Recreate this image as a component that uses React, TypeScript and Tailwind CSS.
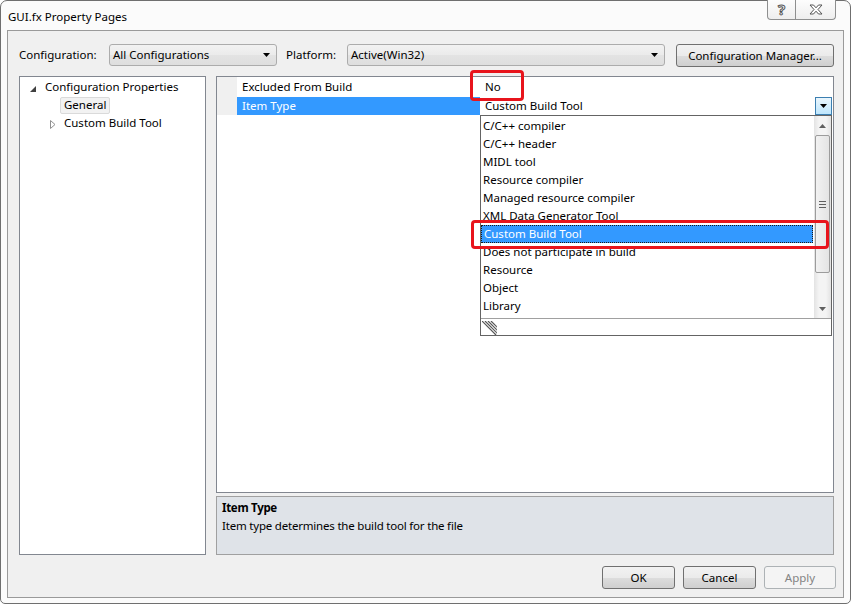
import clsx from 'clsx';

const ITEM_TYPES = [
  'C/C++ compiler',
  'C/C++ header',
  'MIDL tool',
  'Resource compiler',
  'Managed resource compiler',
  'XML Data Generator Tool',
  'Custom Build Tool',
  'Does not participate in build',
  'Resource',
  'Object',
  'Library',
];

function Caret({ className }: { className?: string }) {
  return (
    <svg width="7" height="4" viewBox="0 0 7 4" className={className}>
      <path d="M0 0h7L3.5 4z" fill="currentColor" />
    </svg>
  );
}

function Combo({ value, className }: { value: string; className?: string }) {
  return (
    <div
      className={clsx(
        'h-[22px] flex items-center justify-between pl-[3px] pr-[6px] rounded-[3px] border border-[#acacac] bg-[linear-gradient(#f2f2f2,#ebebeb_50%,#e3e3e3_51%,#dedede)]',
        className,
      )}
    >
      <span>{value}</span>
      <Caret className="text-black" />
    </div>
  );
}

function Btn({
  label,
  disabled,
  className,
}: {
  label: string;
  disabled?: boolean;
  className?: string;
}) {
  return (
    <div
      className={clsx(
        'h-[23px] flex items-center justify-center rounded-[3px] border',
        disabled
          ? 'border-[#adb2b5] bg-[#f4f4f4] text-[#838383]'
          : 'border-[#707070] bg-[linear-gradient(#f2f2f2,#ebebeb_50%,#dddddd_51%,#cfcfcf)] text-black',
        className,
      )}
    >
      {label}
    </div>
  );
}

function SizeGrip() {
  return (
    <svg width="15" height="14" viewBox="0 0 15 14">
      {[0, 3, 6, 9].map((o) => (
        <path key={o} d={`M${o} 0L${o + 14} 14`} stroke="#555" strokeWidth="1.2" />
      ))}
    </svg>
  );
}

function ItemTypeList() {
  return (
    <div className="absolute left-[263px] top-[38px] w-[352px] h-[221px] border border-[#646464] bg-white flex flex-col">
      <div className="flex flex-1">
        <div className="flex-1 flex flex-col pt-px">
          {ITEM_TYPES.map((t) => (
            <div
              key={t}
              className={clsx(
                'h-[18px] flex items-center pl-[2px]',
                t === 'Custom Build Tool' &&
                  'bg-[#3399ff] text-white border border-dotted border-[#1a1a1a] pl-[1px] mr-[1px]',
              )}
            >
              {t}
            </div>
          ))}
        </div>
        {/* vertical scrollbar */}
        <div className="w-[17px] bg-[linear-gradient(90deg,#e3e3e3,#f4f4f4_30%,#f4f4f4_70%,#e3e3e3)] flex flex-col items-center">
          <div className="h-[19px] flex items-center justify-center text-[#606060]">
            <Caret className="rotate-180" />
          </div>
          <div className="w-[15px] h-[138px] rounded-[2px] border border-[#9c9c9c] bg-[linear-gradient(90deg,#f2f2f2,#e4e4e4)] flex flex-col items-center justify-center gap-[2px]">
            <div className="w-[7px] h-px bg-[#606060]" />
            <div className="w-[7px] h-px bg-[#606060]" />
            <div className="w-[7px] h-px bg-[#606060]" />
          </div>
          <div className="flex-1" />
          <div className="h-[18px] flex items-center justify-center text-[#606060]">
            <Caret />
          </div>
        </div>
      </div>
      <div className="h-[17px] border-t border-[#a0a0a0] pl-[1px] flex items-end">
        <SizeGrip />
      </div>
    </div>
  );
}

export default function App() {
  return (
    <div className="relative w-[851px] h-[604px] bg-white font-['Noto_Sans','Open_Sans',sans-serif] text-[11.5px] text-black leading-none">
      <div className="w-full h-full flex flex-col border border-[#6f6f6f] rounded-t-[7px] rounded-b-[5px] bg-[#fbfbfb]">
        {/* title bar */}
        <div className="h-[29px] flex items-start">
          <span className="pl-[7px] pt-[10px]">GUI.fx Property Pages</span>
          <div className="ml-auto mr-[14px] flex h-[20px] -mt-px">
            <div className="w-[29px] border border-[#8e8f8f] border-t-0 rounded-bl-[4px] bg-[linear-gradient(#fdfdfd,#eeeeee)] flex items-center justify-center">
              <span className="text-[15px] font-bold text-white [-webkit-text-stroke:1px_#555]">?</span>
            </div>
            <div className="w-[40px] border border-[#8e8f8f] border-t-0 border-l-0 rounded-br-[4px] bg-[linear-gradient(#fdfdfd,#eeeeee)] flex items-center justify-center">
              <svg width="14" height="11" viewBox="0 0 14 11">
                <path
                  d="M1 1h3.5L7 3.8 9.5 1H13L9 5.5 13 10H9.5L7 7.2 4.5 10H1L5 5.5z"
                  fill="#fff"
                  stroke="#555"
                  strokeWidth="1"
                  strokeLinejoin="round"
                />
              </svg>
            </div>
          </div>
        </div>

        {/* client area */}
        <div className="flex-1 mx-[6px] mb-[5px] border border-[#9a9a9a] bg-[#f0f0f0] flex flex-col pt-[13px] pl-[11px] pr-[9px]">
          <div className="flex items-start">
            <span className="w-[90px] h-[22px] flex items-center">Configuration:</span>
            <Combo value="All Configurations" className="w-[168px]" />
            <span className="ml-[9px] w-[61px] h-[22px] flex items-center">Platform:</span>
            <Combo value="Active(Win32)" className="w-[318px]" />
            <Btn label="Configuration Manager..." className="ml-[11px] w-[158px]" />
          </div>

          <div className="mt-[9px] h-[479px] flex gap-[10px]">
            {/* tree */}
            <div className="w-[187px] border border-[#828790] bg-white pt-px">
              <div className="h-[18px] flex items-center">
                <svg width="6" height="6" viewBox="0 0 6 6" className="ml-[10px] mt-[3px]">
                  <path d="M6 0V6H0z" fill="#404040" />
                </svg>
                <span className="ml-[9px]">Configuration Properties</span>
              </div>
              <div className="h-[18px] flex items-center">
                <span className="ml-[40px] h-[17px] px-[3px] flex items-center rounded-[2px] border border-[#dadada] bg-[#f2f2f2]">
                  General
                </span>
              </div>
              <div className="h-[18px] flex items-center">
                <svg width="6" height="9" viewBox="0 0 6 9" className="ml-[30px] mt-[2px]">
                  <path d="M0.5 0.5L5 4.5 0.5 8.5z" fill="#fff" stroke="#909090" />
                </svg>
                <span className="ml-[8px]">Custom Build Tool</span>
              </div>
            </div>

            {/* property grid + description */}
            <div className="flex-1 flex flex-col">
              <div className="relative flex-1 border border-[#828790] bg-white">
                <div className="flex h-[20px]">
                  <div className="w-[20px] bg-[#f0f0f0]" />
                  <div className="w-[243px] flex items-center pl-[5px]">Excluded From Build</div>
                  <div className="flex-1 flex items-center pl-[5px]">No</div>
                </div>
                <div className="flex h-[18px]">
                  <div className="w-[20px] bg-[#f0f0f0]" />
                  <div className="w-[243px] flex items-center pl-[5px] bg-[#3399ff] text-white">
                    Item Type
                  </div>
                  <div className="flex-1 flex items-center pl-[5px]">
                    <span className="flex-1">Custom Build Tool</span>
                    <div className="w-[17px] h-[18px] mr-px border border-[#3c7fb1] bg-[linear-gradient(#eaf6fd,#bee6fd)] flex items-center justify-center text-black">
                      <Caret />
                    </div>
                  </div>
                </div>
                <ItemTypeList />
              </div>
              <div className="mt-[3px] h-[59px] border border-[#a0a0a0] bg-[#dfe3e8] px-[5px] pt-[5px] flex flex-col gap-[6px]">
                <span className="font-bold tracking-[-0.3px]">Item Type</span>
                <span className="tracking-[-0.2px]">Item type determines the build tool for the file</span>
              </div>
            </div>
          </div>

          <div className="mt-[11px] -mr-[2px] flex justify-end gap-[8px]">
            <Btn label="OK" className="w-[73px]" />
            <Btn label="Cancel" className="w-[73px]" />
            <Btn label="Apply" disabled className="w-[72px]" />
          </div>
        </div>
      </div>

      {/* red annotation boxes */}
      <div className="absolute left-[470px] top-[70px] w-[54px] h-[31px] border-[3px] border-[#e8141c] rounded-[4px]" />
      <div className="absolute left-[471px] top-[220px] w-[358px] h-[29px] border-[3px] border-[#e8141c] rounded-[4px]" />
    </div>
  );
}
